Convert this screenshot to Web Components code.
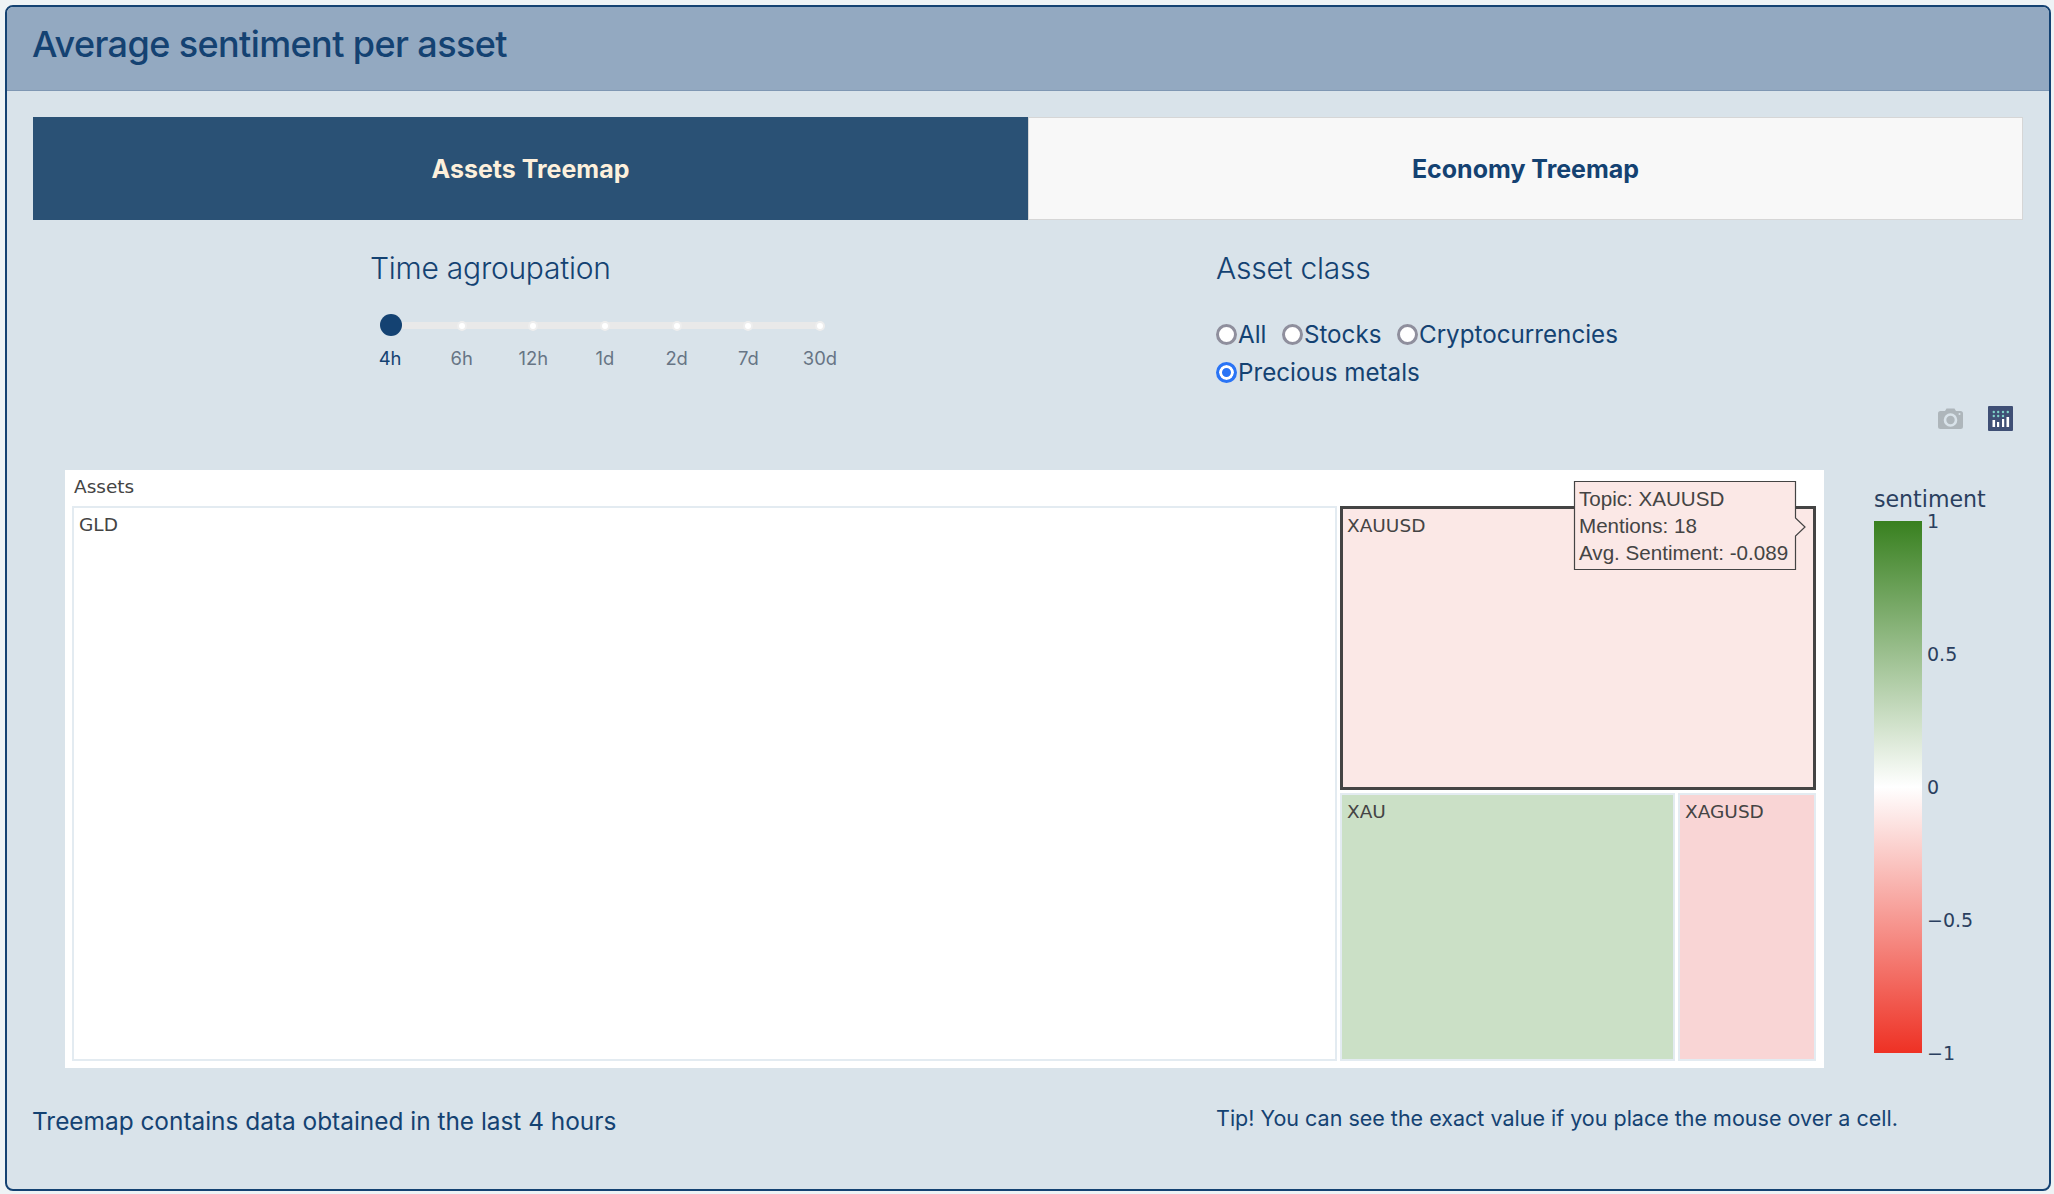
<!DOCTYPE html>
<html><head><meta charset="utf-8"><style>
html,body{margin:0;background:#eef3f5;}
body{padding:5px 3px 4px 5px;font-family:Inter,"Liberation Sans",sans-serif;color:#144272;}
</style></head><body>
<sentiment-card>
<span slot="title">Average sentiment per asset</span>
<tab-bar></tab-bar>
<control-row>
<time-slider slot="left"></time-slider>
<class-radios slot="right"></class-radios>
</control-row>
<mode-bar></mode-bar>
<plot-area></plot-area>
<foot-notes></foot-notes>
</sentiment-card>
<script>
function def(name,html){customElements.define(name,class extends HTMLElement{constructor(){super();this.attachShadow({mode:'open'}).innerHTML=html;}});}
def('sentiment-card',`<style>
:host{display:block;box-sizing:border-box;height:1186px;border:2px solid #144272;border-radius:8px;background:#d9e3ea;overflow:hidden}
header{box-sizing:border-box;height:84px;background:#93a9c1;border-bottom:1px solid #7f97b3;padding:0 25px;font-size:36px;font-weight:500;line-height:74px;letter-spacing:-.6px}
main{padding:26px 26px 0 26px;}
</style><header><slot name="title"></slot></header><main><slot></slot></main>`);
def('tab-bar',`<style>
:host{display:grid;grid-template-columns:1fr 1fr;height:103px}
div{display:flex;align-items:center;justify-content:center;font-size:25px;font-weight:700;box-sizing:border-box}
.a{background:#2a5175;color:#fdf0dc}.b{background:#f8f8f8;color:#144272;border:1px solid #d6d6d6}
</style><div class="a">Assets Treemap</div><div class="b">Economy Treemap</div>`);
def('control-row',`<style>
:host{display:grid;grid-template-columns:1183px 1fr;height:186px}
.l{padding-left:337px}
</style><div class="l"><slot name="left"></slot></div><div><slot name="right"></slot></div>`);
def('time-slider',`<style>
:host{display:block;font-size:30px;font-weight:300}
h3{font:inherit;margin:0;line-height:40px;padding-top:28px;letter-spacing:-.25px}
.t{position:relative;width:430px;height:7px;background:#e9e9e9;border-radius:4px;margin:34px 0 0 20px}
.h{position:absolute;left:-10.500px;top:-8px;width:22px;height:22px;border-radius:50%;background:#144272}
.marks{display:flex;justify-content:space-between;width:430px;height:0}
.m{width:0;display:flex;flex-direction:column;align-items:center;position:relative;top:1px}
.d{flex:none;width:6px;height:6px;border-radius:50%;background:#fff;box-shadow:0 0 0 2px #eee}
.m span{font-size:18.400px;font-weight:400;color:#677585;margin-top:18px;white-space:nowrap;line-height:22px}
.m.on span{color:#144272}.m.on .d{visibility:hidden}
</style><h3>Time agroupation</h3><div class="t"><div class="marks">
<div class="m on"><div class="d"></div><span>4h</span></div>
<div class="m"><div class="d"></div><span>6h</span></div>
<div class="m"><div class="d"></div><span>12h</span></div>
<div class="m"><div class="d"></div><span>1d</span></div>
<div class="m"><div class="d"></div><span>2d</span></div>
<div class="m"><div class="d"></div><span>7d</span></div>
<div class="m"><div class="d"></div><span>30d</span></div>
</div><div class="h"></div></div>`);
def('class-radios',`<style>
:host{display:block}
h3{font-size:30px;font-weight:300;margin:0;line-height:40px;padding-top:28px;letter-spacing:-.25px}
.r{display:flex;flex-wrap:wrap;width:500px;margin-top:27px}
label{display:flex;align-items:center;height:38px;font-size:24.200px;margin-right:15.500px;white-space:nowrap}
i{box-sizing:border-box;width:21px;height:21px;border-radius:50%;border:3px solid #8f8f9d;background:#fff;margin-right:1px}
i.on{border:3px solid #2a74f5;background:#2a74f5;box-shadow:inset 0 0 0 3px #fff}
</style><h3>Asset class</h3><div class="r">
<label><i></i>All</label><label><i></i>Stocks</label><label><i></i>Cryptocurrencies</label><label><i class="on"></i>Precious metals</label></div>`);
def('mode-bar',`<style>
:host{display:flex;justify-content:flex-end;align-items:center;gap:25px;height:25px;padding-right:10px}
</style>
<svg width="25" height="21" viewBox="0 0 25 21"><path fill="#aeb6bb" d="M2.5 3H7L8.5.5h8L18 3h4.500a2.500 2.500 0 0 1 2.500 2.500v13a2.500 2.500 0 0 1-2.500 2.500h-20A2.500 2.500 0 0 1 0 18.500v-13A2.500 2.500 0 0 1 2.500 3z"/><circle cx="12.500" cy="12" r="5.500" fill="none" stroke="#d9e3ea" stroke-width="2.600"/><circle cx="21.500" cy="6" r="1" fill="#d9e3ea"/></svg>
<svg width="25" height="25" viewBox="0 0 25 25"><rect width="25" height="25" rx="1" fill="#3f4f75"/>
<g fill="#fff"><rect x="4.500" y="14" width="2.600" height="7"/><rect x="9" y="16" width="2.200" height="5"/><rect x="14" y="13" width="2.200" height="8"/><rect x="18.500" y="11" width="2.600" height="10"/></g>
<g fill="#7fd1c8"><circle cx="5.800" cy="6" r="1.200"/><circle cx="10.200" cy="6" r="1.200"/><circle cx="15" cy="6" r="1.200"/><circle cx="19.800" cy="6" r="1.200"/><circle cx="5.800" cy="10" r="1.200"/><circle cx="10.200" cy="10" r="1.200"/><circle cx="15" cy="10" r="1.200"/></g></svg>`);
def('plot-area',`<style>
:host{display:flex;margin:39px 0 0 32px;height:598px;font-family:"DejaVu Sans",Verdana,sans-serif;}
</style><tree-map></tree-map><color-bar></color-bar>`);
def('tree-map',`<style>
:host{display:flex;flex-direction:column;box-sizing:border-box;width:1759px;height:598px;background:#fff;padding:0 8px 7px 7px;color:#444;font-size:18.500px;position:relative}
.p{height:36px;line-height:34px;padding-left:2px;flex:none}
.g{flex:1;display:grid;grid-template-columns:1265px 476px;gap:3px;}
.c{box-sizing:border-box;padding:6px 5px;border:2px solid #e3ebf1;line-height:22px}
.gld{background:#fff}
.rc{display:grid;grid-template-rows:284px 1fr;gap:3px;min-height:0}
.xu{background:#fbe8e6;border:3px solid #444;padding:6px 4px}
.bot{display:grid;grid-template-columns:335px 1fr;gap:3px;}
.xa{background:#cbe0c6}.xg{background:#f9d5d5}
.tip{position:absolute;left:1509px;top:11px;width:235px;height:89px}
.tip svg{position:absolute;inset:0;overflow:visible}
.tip div{position:relative;padding:4px 0 0 5px;font:20.600px/27px "Liberation Sans",sans-serif;color:#444;white-space:nowrap}
</style>
<div class="p">Assets</div>
<div class="g"><div class="c gld">GLD</div><div class="rc"><div class="c xu">XAUUSD</div><div class="bot"><div class="c xa">XAU</div><div class="c xg">XAGUSD</div></div></div></div>
<div class="tip"><svg width="235" height="89"><path d="M.5.5H221.500V37L231 46L221.500 55V88.500H.5Z" fill="#fbe8e6" stroke="#444" stroke-width="1.200"/></svg><div>Topic: XAUUSD<br>Mentions: 18<br>Avg. Sentiment: -0.089</div></div>`);
def('color-bar',`<style>
:host{display:block;margin-left:50px;color:#2a3f5f;font-size:22.100px;position:relative;width:120px}
.ti{line-height:28px;height:51px;padding-top:15px;box-sizing:border-box;white-space:nowrap}
.b{width:48px;height:532px;background:linear-gradient(#38801f,#fff 50%,#ee3124)}
.l{position:absolute;left:53px;top:51px;height:532px;display:flex;flex-direction:column;justify-content:space-between;font-size:19px;line-height:0}
.l span{display:block;height:0;white-space:nowrap}
</style><div class="ti">sentiment</div><div class="b"></div><div class="l"><span>1</span><span>0.5</span><span>0</span><span>−0.5</span><span>−1</span></div>`);
def('foot-notes',`<style>
:host{display:grid;grid-template-columns:1183px 1fr;margin-top:29px}
.a{font-size:24.400px;line-height:48px;margin-left:-1px}.b{font-size:21.500px;line-height:42px}
</style><div class="a">Treemap contains data obtained in the last 4 hours</div><div class="b">Tip! You can see the exact value if you place the mouse over a cell.</div>`);
</script></body></html>
